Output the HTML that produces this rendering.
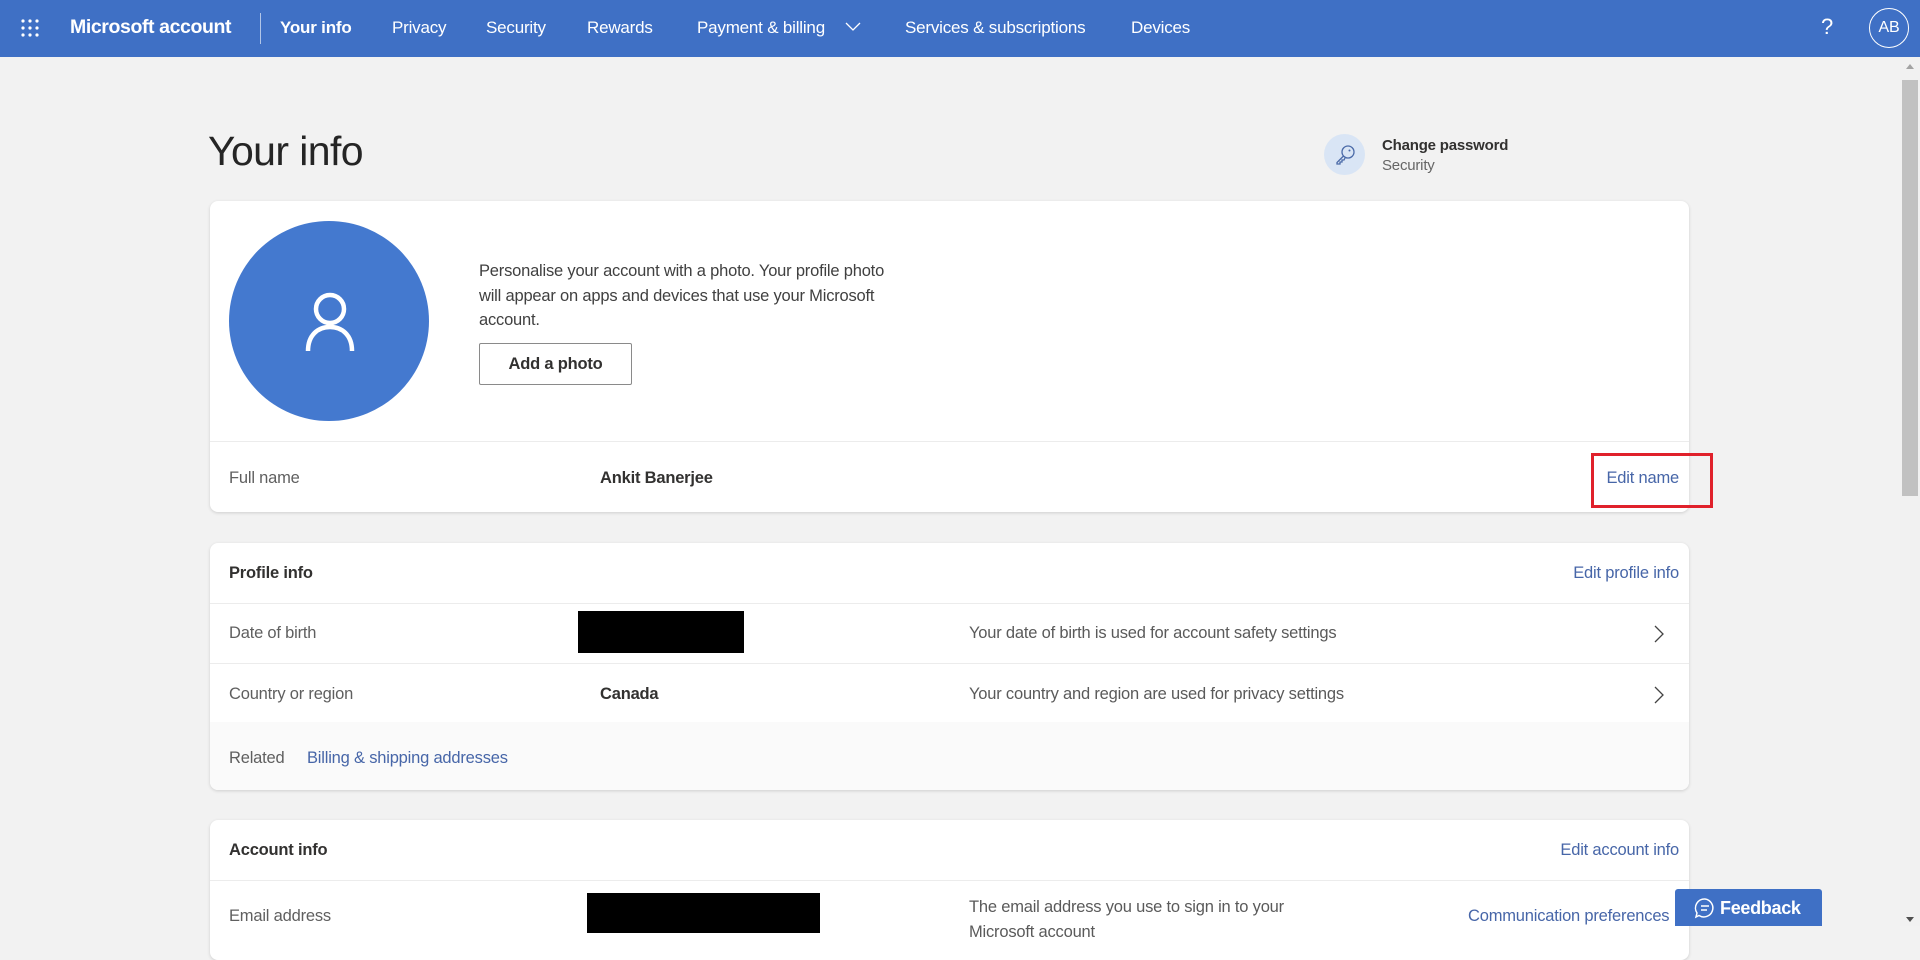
<!DOCTYPE html>
<html><head><meta charset="utf-8">
<style>
*{margin:0;padding:0;box-sizing:border-box}
body{width:1920px;height:926px;overflow:hidden;background:#f2f2f2;font-family:"Liberation Sans",sans-serif;color:#323130;position:relative;letter-spacing:-0.2px}
.a{position:absolute;white-space:nowrap}
.hdr{position:absolute;left:0;top:0;width:1920px;height:57px;background:#3f70c5;color:#fff}
.hdr .a{top:18px;font-size:17px}
.card{position:absolute;left:210px;width:1479px;background:#fff;border-radius:8px;box-shadow:0 1px 3px rgba(0,0,0,.15)}
.line{position:absolute;left:0;right:0;height:1px;background:#ececec}
.lbl{font-size:16.5px;color:#5f5f5f}
.val{font-size:16.5px;font-weight:bold;color:#323130}
.lnk{font-size:16.5px;color:#4766a8}
.desc{font-size:16.5px;color:#5a5a5a}
</style></head><body>
<div class="hdr">
  <svg class="a" style="left:20px;top:18px" width="20" height="20" viewBox="0 0 20 20" fill="#fff">
    <circle cx="3" cy="3" r="1.6"/><circle cx="10" cy="3" r="1.6"/><circle cx="17" cy="3" r="1.6"/>
    <circle cx="3" cy="10" r="1.6"/><circle cx="10" cy="10" r="1.6"/><circle cx="17" cy="10" r="1.6"/>
    <circle cx="3" cy="17" r="1.6"/><circle cx="10" cy="17" r="1.6"/><circle cx="17" cy="17" r="1.6"/>
  </svg>
  <div class="a" style="left:70px;top:16px;font-size:19.5px;font-weight:bold;letter-spacing:-0.4px">Microsoft account</div>
  <div style="position:absolute;left:260px;top:13px;width:1px;height:31px;background:rgba(255,255,255,.6)"></div>
  <div class="a" style="left:280px;font-weight:bold">Your info</div>
  <div class="a" style="left:392px">Privacy</div>
  <div class="a" style="left:486px">Security</div>
  <div class="a" style="left:587px">Rewards</div>
  <div class="a" style="left:697px">Payment &amp; billing</div>
  <svg class="a" style="left:845px;top:22px" width="16" height="10" viewBox="0 0 16 10"><path d="M1 1 L8 8 L15 1" stroke="#fff" stroke-width="1.3" fill="none"/></svg>
  <div class="a" style="left:905px">Services &amp; subscriptions</div>
  <div class="a" style="left:1131px">Devices</div>
  <div class="a" style="left:1821px;top:14px;font-size:22px;font-weight:normal">?</div>
  <div style="position:absolute;left:1869px;top:8px;width:40px;height:40px;border:1.5px solid #fff;border-radius:50%;text-align:center;line-height:37px;font-size:16px">AB</div>
</div>
<!-- scrollbar -->
<div style="position:absolute;left:1900px;top:57px;width:20px;height:869px;background:#f1f1f1"></div>
<div style="position:absolute;left:1906px;top:64px;width:0;height:0;border-left:4px solid transparent;border-right:4px solid transparent;border-bottom:5px solid #a3a3a3"></div>
<div style="position:absolute;left:1902px;top:80px;width:16px;height:416px;background:#c1c1c1"></div>
<div style="position:absolute;left:1906px;top:917px;width:0;height:0;border-left:4px solid transparent;border-right:4px solid transparent;border-top:5px solid #505050"></div>

<div class="a" style="left:208px;top:128px;font-size:41px;color:#252525;letter-spacing:-0.6px">Your info</div>
<div style="position:absolute;left:1324px;top:134px;width:41px;height:41px;border-radius:50%;background:#d9e5f5"></div>
<svg class="a" style="left:1334px;top:144px" width="22" height="22" viewBox="0 0 22 22" fill="none" stroke="#4a6aa8" stroke-width="1.3"><circle cx="14" cy="8" r="6"/><circle cx="15.5" cy="6.5" r="1" fill="#4a6aa8" stroke="none"/><path d="M9.5 12 L3 18.5 L3 20 L6 20 L6 18 L8 18 L8 16 L10 16 L11 14"/></svg>
<div class="a" style="left:1382px;top:137px;font-size:15px;font-weight:bold;color:#323130">Change password</div>
<div class="a" style="left:1382px;top:157px;font-size:15px;color:#666">Security</div>

<!-- card 1 -->
<div class="card" style="top:201px;height:311px">
  <div style="position:absolute;left:19px;top:20px;width:200px;height:200px;border-radius:50%;background:#4479cf"></div>
  <svg class="a" style="left:94px;top:90px" width="52" height="62" viewBox="0 0 52 62" fill="none" stroke="#fff" stroke-width="4.5"><circle cx="26" cy="18" r="14"/><path d="M4 60 C4 44 14 36 26 36 C38 36 48 44 48 60"/></svg>
  <div class="a desc" style="left:269px;top:58px;line-height:24.5px;color:#404040;font-size:16.5px">Personalise your account with a photo. Your profile photo<br>will appear on apps and devices that use your Microsoft<br>account.</div>
  <div style="position:absolute;left:269px;top:142px;width:153px;height:42px;border:1px solid #8a8a8a;border-radius:2px;text-align:center;line-height:40px;font-size:16.5px;font-weight:bold;color:#323130">Add a photo</div>
  <div class="line" style="top:240px"></div>
  <div class="a lbl" style="left:19px;top:268px">Full name</div>
  <div class="a val" style="left:390px;top:268px">Ankit Banerjee</div>
  <div class="a lnk" style="right:10px;top:268px">Edit name</div>
</div>
<div style="position:absolute;left:1591px;top:453px;width:122px;height:55px;border:3px solid #e0212b"></div>

<!-- card 2 -->
<div class="card" style="top:543px;height:247px;overflow:hidden">
  <div class="a" style="left:19px;top:21px;font-size:16.5px;font-weight:bold">Profile info</div>
  <div class="a lnk" style="right:10px;top:21px">Edit profile info</div>
  <div class="line" style="top:60px"></div>
  <div class="a lbl" style="left:19px;top:81px">Date of birth</div>
  <div style="position:absolute;left:368px;top:68px;width:166px;height:42px;background:#000"></div>
  <div class="a desc" style="left:759px;top:81px">Your date of birth is used for account safety settings</div>
  <svg class="a" style="left:1444px;top:82px" width="10" height="18" viewBox="0 0 10 18"><path d="M1 1 L9 9 L1 17" stroke="#444" stroke-width="1.3" fill="none"/></svg>
  <div class="line" style="top:120px"></div>
  <div class="a lbl" style="left:19px;top:142px">Country or region</div>
  <div class="a val" style="left:390px;top:142px">Canada</div>
  <div class="a desc" style="left:759px;top:142px">Your country and region are used for privacy settings</div>
  <svg class="a" style="left:1444px;top:143px" width="10" height="18" viewBox="0 0 10 18"><path d="M1 1 L9 9 L1 17" stroke="#444" stroke-width="1.3" fill="none"/></svg>
  <div style="position:absolute;left:0;right:0;top:179px;bottom:0;background:#fafafa"></div>
  <div class="a lbl" style="left:19px;top:206px">Related</div>
  <div class="a lnk" style="left:97px;top:206px">Billing &amp; shipping addresses</div>
</div>

<!-- card 3 -->
<div class="card" style="top:820px;height:140px">
  <div class="a" style="left:19px;top:21px;font-size:16.5px;font-weight:bold">Account info</div>
  <div class="a lnk" style="right:10px;top:21px">Edit account info</div>
  <div class="line" style="top:60px"></div>
  <div class="a lbl" style="left:19px;top:87px">Email address</div>
  <div style="position:absolute;left:377px;top:73px;width:233px;height:40px;background:#000"></div>
  <div class="a desc" style="left:759px;top:75px;line-height:25px">The email address you use to sign in to your<br>Microsoft account</div>
  <div class="a lnk" style="left:1258px;top:87px">Communication preferences</div>
</div>

<div style="position:absolute;left:1675px;top:889px;width:147px;height:37px;background:#3f70c5;border-radius:3px 3px 0 0;color:#fff"></div>
<svg class="a" style="left:1694px;top:897px" width="22" height="22" viewBox="0 0 22 22" fill="none" stroke="#fff" stroke-width="1.5"><path d="M11 2 A9 9 0 1 1 5 18.5 L2 20 L3 16 A9 9 0 0 1 11 2 Z"/><path d="M7 9 H15 M7 13 H13"/></svg>
<div class="a" style="left:1720px;top:898px;font-size:18px;font-weight:bold;color:#fff;letter-spacing:-0.3px">Feedback</div>
</body></html>
